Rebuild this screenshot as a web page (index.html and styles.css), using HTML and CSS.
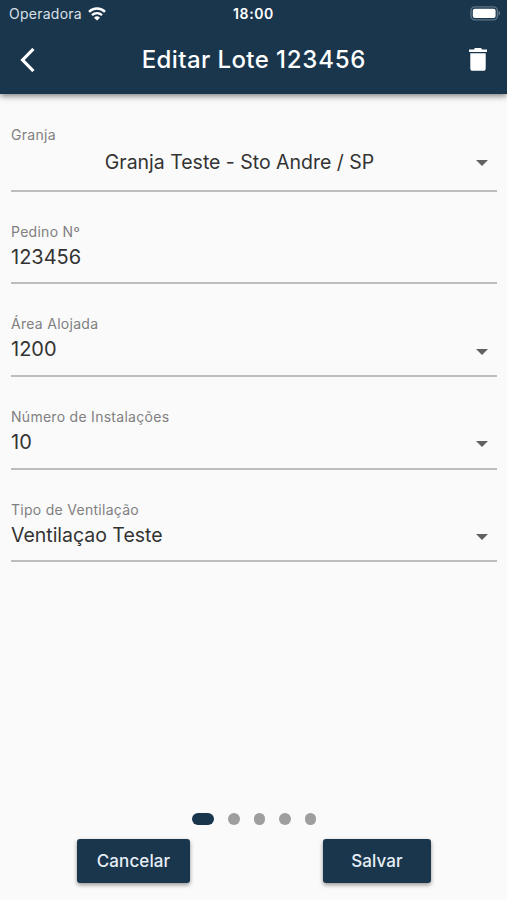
FILE: index.html
```html
<!DOCTYPE html>
<html lang="pt-BR">
<head>
<meta charset="utf-8">
<meta name="viewport" content="width=device-width, initial-scale=1">
<title>Editar Lote</title>
<link rel="stylesheet" href="styles.css">
</head>
<body>
  <header class="header">
    <div class="status">
      <div class="carrier">
        <span class="carrier-name">Operadora</span>
        <svg class="wifi" width="18" height="14" viewBox="0 0 18 14">
          <path d="M1 4.8a11.5 11.5 0 0 1 16 0" fill="none" stroke="#fff" stroke-width="2.5"/>
          <path d="M4 8.1a7.2 7.2 0 0 1 10 0" fill="none" stroke="#fff" stroke-width="2.4"/>
          <path d="M9 13.6L6 10.8a4.3 4.3 0 0 1 6 0z" fill="#fff"/>
        </svg>
      </div>
      <span class="time">18:00</span>
      <svg class="battery" width="31" height="15" viewBox="0 0 31 15">
        <rect x="1" y="0.9" width="26.4" height="13" rx="4" fill="none" stroke="#5f7485" stroke-width="1.4"/>
        <rect x="2.8" y="2.7" width="22.8" height="9.4" rx="2" fill="#fff"/>
        <path d="M28.6 5v4.6c2-.8 2-3.8 0-4.6z" fill="#6c7f8e"/>
      </svg>
    </div>
    <div class="appbar">
      <svg class="back" width="16" height="24" viewBox="0 0 16 24">
        <path d="M13.4 1L2.6 12l10.800 11" fill="none" stroke="#fff" stroke-width="3.2"/>
      </svg>
      <h1 class="title">Editar Lote <span class="lote">123456</span></h1>
      <svg class="trash" width="18" height="23" viewBox="0 0 18 23">
        <path d="M0 1.4h4.8L6 0h6l1.2 1.4H18V4H0zM1.3 5.2h15.400v15a2.600 2.600 0 0 1-2.600 2.600H3.900a2.600 2.600 0 0 1-2.600-2.600z" fill="#fff"/>
      </svg>
    </div>
  </header>

  <main class="form">
    <div class="field field-granja">
      <span class="label">Granja</span>
      <div class="row">
        <span class="value">Granja Teste - Sto Andre / SP</span>
        <span class="arrow"></span>
      </div>
    </div>
    <div class="field field-pedido">
      <span class="label">Pedino Nº</span>
      <div class="row">
        <span class="value number">123456</span>
      </div>
    </div>
    <div class="field">
      <span class="label">Área Alojada</span>
      <div class="row">
        <span class="value number">1200</span>
        <span class="arrow"></span>
      </div>
    </div>
    <div class="field">
      <span class="label">Número de Instalações</span>
      <div class="row">
        <span class="value number">10</span>
        <span class="arrow"></span>
      </div>
    </div>
    <div class="field">
      <span class="label">Tipo de Ventilação</span>
      <div class="row">
        <span class="value">Ventilaçao Teste</span>
        <span class="arrow"></span>
      </div>
    </div>
  </main>

  <footer class="footer">
    <div class="dots">
      <span class="dot active"></span>
      <span class="dot"></span>
      <span class="dot"></span>
      <span class="dot"></span>
      <span class="dot"></span>
    </div>
    <div class="buttons">
      <button class="btn btn-cancel">Cancelar</button>
      <button class="btn btn-save">Salvar</button>
    </div>
  </footer>
</body>
</html>
```
FILE: styles.css
```css
* {
  box-sizing: border-box;
}

body {
  margin: 0;
  height: 900px;
  display: flex;
  flex-direction: column;
  overflow: hidden;
  background-color: #fafafa;
  color: #333;
  font-family: Inter, "Liberation Sans", sans-serif;
}

/* Top bar */
.header {
  height: 94px;
  background-color: #1a364d;
  color: white;
  box-shadow: 0 2px 6px rgba(0, 0, 0, 0.5);
}

.status {
  display: grid;
  grid-template-columns: 1fr auto 1fr;
  align-items: center;
  height: 27px;
  padding: 0 6px;
}

.carrier {
  display: flex;
  align-items: center;
  gap: 6px;
  padding-left: 3px;
}

.carrier-name {
  font-size: 14px;
  color: #d9e0e6;
  letter-spacing: 0.25px;
}

.time {
  font-size: 14px;
  font-weight: 600;
  letter-spacing: 0.6px;
}

.battery {
  justify-self: end;
}

.appbar {
  display: flex;
  align-items: center;
  justify-content: space-between;
  height: 65px;
  padding: 0 20px;
}

.title {
  margin: 0;
  padding-left: 3px;
  font-size: 24px;
  font-weight: 450;
  letter-spacing: 0.4px;
}

.lote {
  letter-spacing: 0.8px;
}

/* Form fields */
.form {
  flex: 1;
  padding: 0 10px 0 11px;
}

.field {
  height: 92.8px;
  padding-top: 31px;
  border-bottom: 2px solid #bdbdbd;
}

.field-granja {
  height: 98px;
  padding-top: 32px;
}

.field-pedido {
  height: 92px;
}

.label {
  display: block;
  font-size: 14px;
  line-height: 18px;
  letter-spacing: 0.28px;
  color: #808080;
}

.row {
  display: flex;
  align-items: center;
  height: 24px;
  margin-top: 4px;
  padding-right: 9px;
}

.value {
  flex: 1;
  font-size: 19.5px;
  line-height: 24px;
  letter-spacing: -0.02px;
}

.number {
  font-size: 20px;
  letter-spacing: 0;
}

.field-granja .row {
  margin-top: 6px;
}

.field-granja .value {
  padding-right: 8px;
  text-align: center;
}

.arrow {
  border-left: 6px solid transparent;
  border-right: 6px solid transparent;
  border-top: 6px solid #616161;
  margin-top: 5px;
}

.field-granja .arrow {
  margin-top: 1px;
}

/* Page dots and buttons */
.dots {
  display: flex;
  justify-content: center;
  gap: 14px;
  padding-left: 1px;
}

.dot {
  width: 11.6px;
  height: 11.6px;
  border-radius: 6px;
  background-color: #9e9e9e;
}

.dot.active {
  width: 22.5px;
  background-color: #1a364d;
}

.buttons {
  display: flex;
  justify-content: space-between;
  padding: 14px 76px 17px 77px;
}

.btn {
  height: 44px;
  padding: 0;
  border: none;
  border-radius: 3px;
  background-color: #1a364d;
  color: #e6eef5;
  font-family: inherit;
  font-size: 17px;
  font-weight: 500;
  letter-spacing: 0.1px;
  box-shadow: 0 2px 4px rgba(0, 0, 0, 0.4);
  cursor: pointer;
}

.btn-cancel {
  width: 113px;
}

.btn-save {
  width: 108px;
}
```
